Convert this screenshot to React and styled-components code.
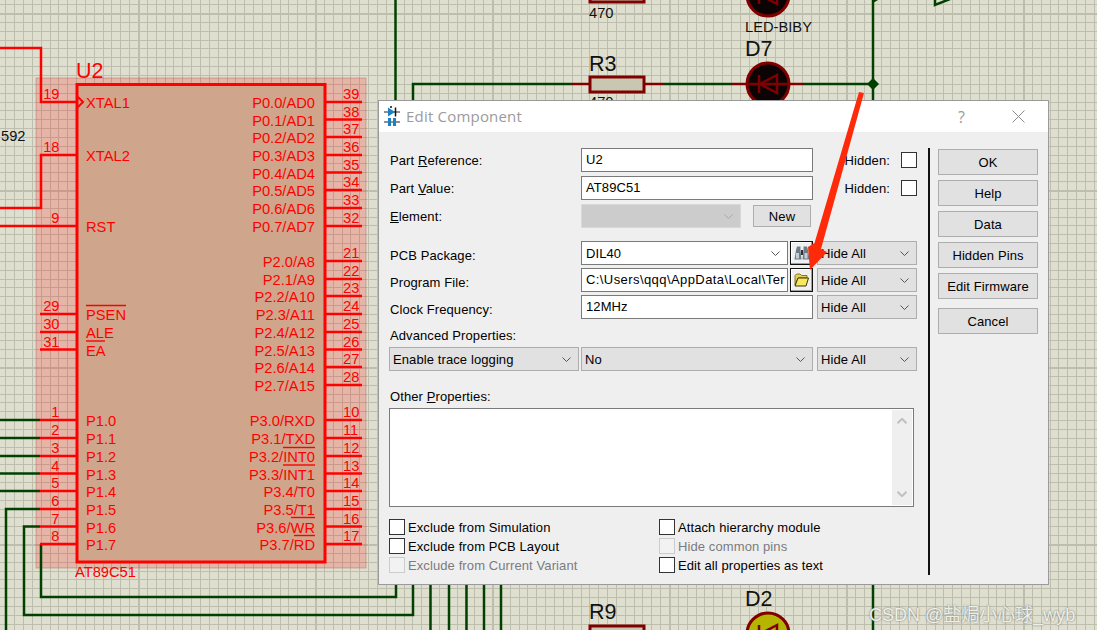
import React from 'react';
import styled, { createGlobalStyle } from 'styled-components';

const GlobalStyle = createGlobalStyle`
  html, body {
    margin: 0;
    padding: 0;
    background: #dfdfcf;
  }
`;

const Page = styled.div`
  position: relative;
  width: 1097px;
  height: 630px;
  overflow: hidden;
  background: #dfdfcf;
  font-family: 'Liberation Sans', Arial, sans-serif;
`;

const Canvas = styled.svg`
  position: absolute;
  left: 0;
  top: 0;
  text {
    font-family: 'Liberation Sans', Arial, sans-serif;
  }
`;

const Dialog = styled.div`
  position: absolute;
  left: 378px;
  top: 100px;
  width: 671px;
  height: 485px;
  box-sizing: border-box;
  border: 1px solid #9a9a9a;
  background: #efefef;
  font-size: 13px;
  letter-spacing: 0.1px;
  color: #000;
  display: flex;
  flex-direction: column;
`;

const TitleBar = styled.div`
  height: 31px;
  flex: none;
  background: #fff;
  display: flex;
  align-items: center;
  padding-left: 5px;
  gap: 6px;
`;

const TitleText = styled.span`
  font-family: 'Open Sans', sans-serif;
  font-size: 15px;
  letter-spacing: 0.2px;
  line-height: 30px;
  margin-top: -2px;
  color: #9b9b9b;
  flex: 1;
`;

const HelpMark = styled.span`
  font-family: 'Open Sans', sans-serif;
  font-size: 16px;
  color: #9a9a9a;
  width: 48px;
`;

const CloseMark = styled.svg`
  margin-right: 23px;
`;

const Body = styled.div`
  flex: 1;
  display: flex;
  padding: 16px 0 9px 10px;
  min-height: 0;
`;

const Form = styled.div`
  width: 528px;
  flex: none;
  display: flex;
  flex-direction: column;
`;

const Row = styled.div`
  display: flex;
  align-items: center;
  height: 24px;
  margin-top: ${(p) => p.$top || 0}px;
`;

const Label = styled.label`
  width: 191px;
  flex: none;
  padding-left: 1px;
  padding-top: ${(p) => (p.$drop ? 5 : 0)}px;
`;

const TextField = styled.div`
  width: ${(p) => p.$w}px;
  height: 24px;
  flex: none;
  box-sizing: border-box;
  border: 1px solid #7a7a7a;
  background: #fff;
  padding-left: 4px;
  line-height: 21px;
  letter-spacing: ${(p) => p.$track || 0.1}px;
  overflow: hidden;
  white-space: nowrap;
`;

const Hidden = styled.div`
  flex: 1;
  display: flex;
  justify-content: flex-end;
  align-items: center;
  gap: 11px;
`;

const Box = styled.span`
  width: 16px;
  height: 16px;
  flex: none;
  box-sizing: border-box;
  border: 1px solid ${(p) => (p.$off ? '#cccccc' : '#333333')};
  background: ${(p) => (p.$off ? '#f2f2f2' : '#ffffff')};
`;

const SelectBox = styled.div`
  width: ${(p) => p.$w}px;
  height: 24px;
  flex: none;
  box-sizing: border-box;
  margin-left: ${(p) => p.$left || 0}px;
  border: 1px solid ${(p) => (p.$white ? '#7a7a7a' : p.$off ? '#d9d9d9' : '#adadad')};
  background: ${(p) => (p.$white ? '#fff' : p.$off ? '#cccccc' : '#e1e1e1')};
  display: flex;
  align-items: center;
  justify-content: space-between;
  padding: 0 7px 0 ${(p) => (p.$white ? 4 : 3)}px;
`;

const PushButton = styled.button`
  width: ${(p) => p.$w || 100}px;
  height: ${(p) => p.$h || 26}px;
  flex: none;
  margin: 0;
  margin-left: ${(p) => p.$left || 0}px;
  margin-top: ${(p) => p.$top || 0}px;
  padding: 0;
  box-sizing: border-box;
  border: 1px solid #adadad;
  background: #e1e1e1;
  color: #000;
  font-family: inherit;
  font-size: 13px;
  letter-spacing: 0.1px;
`;

const IconButton = styled.div`
  width: 23px;
  height: 24px;
  flex: none;
  margin-left: 2px;
  box-sizing: border-box;
  border: 1px solid #111;
  background: #f0f0f0;
  box-shadow: inset -1px -1px 0 #a0a0a0, inset 1px 1px 0 #fff;
  display: flex;
  align-items: center;
  justify-content: center;
`;

const BlockLabel = styled.div`
  height: ${(p) => p.$h}px;
  display: flex;
  align-items: flex-end;
  padding: 0 0 ${(p) => p.$pad}px 1px;
  box-sizing: border-box;
`;

const MemoBox = styled.div`
  width: 525px;
  height: 99px;
  box-sizing: border-box;
  border: 1px solid #7a7a7a;
  background: #fff;
  display: flex;
  justify-content: flex-end;
  padding: 1px;
`;

const ScrollTrack = styled.div`
  width: 20px;
  background: #efefef;
  display: flex;
  flex-direction: column;
  justify-content: space-between;
  align-items: center;
  padding: 8px 0;
  box-sizing: border-box;
`;

const OptionGrid = styled.div`
  margin-top: 12px;
  display: grid;
  grid-template-columns: 270px 1fr;
  grid-auto-rows: 16px;
  row-gap: 3px;
`;

const Option = styled.div`
  display: flex;
  align-items: center;
  gap: 3px;
  color: ${(p) => (p.$off ? '#7b7b80' : '#000')};
`;

const Divider = styled.div`
  width: 2px;
  flex: none;
  margin-left: 11px;
  background: #111;
`;

const ButtonColumn = styled.div`
  margin-left: 8px;
  display: flex;
  flex-direction: column;
  padding-top: 1px;
`;

const Arrow = styled.svg`
  position: absolute;
  left: 0;
  top: 0;
  pointer-events: none;
`;

const Watermark = styled.div`
  position: absolute;
  left: 869px;
  top: 600px;
  font-family: 'Liberation Sans', 'Noto Sans CJK SC', sans-serif;
  font-size: 18px;
  white-space: nowrap;
  color: rgba(245, 245, 240, 0.95);
  text-shadow: 0 0 2px #6a6a60;
`;

const RED = '#ff0000';
const GREEN = '#004100';
const DARK = '#800000';

const rightPins = [
  ['39', 102, 'P0.0/AD0'], ['38', 119.5, 'P0.1/AD1'], ['37', 137, 'P0.2/AD2'], ['36', 155, 'P0.3/AD3'],
  ['35', 172.5, 'P0.4/AD4'], ['34', 190, 'P0.5/AD5'], ['33', 208, 'P0.6/AD6'], ['32', 226, 'P0.7/AD7'],
  ['21', 261, 'P2.0/A8'], ['22', 279, 'P2.1/A9'], ['23', 296, 'P2.2/A10'], ['24', 314, 'P2.3/A11'],
  ['25', 332, 'P2.4/A12'], ['26', 349.5, 'P2.5/A13'], ['27', 367, 'P2.6/A14'], ['28', 385, 'P2.7/A15'],
  ['10', 420, 'P3.0/RXD'], ['11', 438, 'P3.1/TXD'], ['12', 456, 'P3.2/INT0'], ['13', 473.5, 'P3.3/INT1'],
  ['14', 491, 'P3.4/T0'], ['15', 509, 'P3.5/T1'], ['16', 526.5, 'P3.6/WR'], ['17', 544, 'P3.7/RD'],
];

const leftPins = [
  ['19', 102, 'XTAL1'], ['18', 155, 'XTAL2'], ['9', 226, 'RST'], ['29', 314, 'PSEN'],
  ['30', 332, 'ALE'], ['31', 349.5, 'EA'], ['1', 420, 'P1.0'], ['2', 438, 'P1.1'],
  ['3', 456, 'P1.2'], ['4', 473.5, 'P1.3'], ['5', 491, 'P1.4'], ['6', 509, 'P1.5'],
  ['7', 526.5, 'P1.6'], ['8', 544, 'P1.7'],
];

const overlines = [
  [86, 126, 305.5], [86, 105, 341], [283, 315, 447.5], [283, 315, 465],
  [291, 315, 517.5], [294, 315, 535.5],
];

const wires = [
  'M395.5 0V100', 'M413 100V84H571', 'M663 84H731', 'M804 84H873', 'M873 0V100',
  'M0 420H40', 'M0 438H40', 'M0 456H40', 'M0 473.5H40', 'M0 491H40',
  'M40 509H6V630', 'M40 526.5H24V615H378', 'M41 544V597H378',
  'M378 597H396V585', 'M378 615H413V585', 'M430.5 585V630', 'M449 585V630',
  'M466.5 585V630', 'M484 585V630', 'M501 585V630', 'M873 585V630',
];

// grid: 8.85px cells, every 20th line is a heavier one
const gridLines = (start, limit) => {
  const lines = [];
  for (let i = -40; i * 8.85 + start < limit; i += 1) {
    const at = Math.round(start + i * 8.85);
    if (at >= 0) lines.push({ at, major: i % 20 === 0 });
  }
  return lines;
};

function Chevron({ color = '#555', w = 9, h = 5, up = false, sw = 1 }) {
  return (
    <svg width={w} height={h} viewBox="0 0 9 5">
      <path d={up ? 'M0.5 4.5L4.5 0.5L8.5 4.5' : 'M0.5 0.5L4.5 4.5L8.5 0.5'} fill="none" stroke={color} strokeWidth={sw} />
    </svg>
  );
}

function Diode({ cx, cy, fill, inner }) {
  return (
    <g>
      <circle cx={cx} cy={cy} r={21} fill={fill} stroke={DARK} strokeWidth={3} />
      <path d={`M${cx + 9} ${cy - 9}L${cx - 8} ${cy}L${cx + 9} ${cy + 9}Z`} fill="none" stroke={inner} strokeWidth={2.5} />
      <path d={`M${cx - 9} ${cy - 9}V${cy + 9}`} stroke={inner} strokeWidth={2.5} />
      <path d={`M${cx - 37} ${cy}H${cx + 36}`} stroke={DARK} strokeWidth={2.5} />
    </g>
  );
}

function Resistor({ x, y }) {
  return (
    <g>
      <path d={`M${x - 18} ${y}H${x + 74}`} stroke={DARK} strokeWidth={2.5} />
      <rect x={x + 1} y={y - 7} width={54} height={15} fill="#c8c8b0" stroke={DARK} strokeWidth={3} />
    </g>
  );
}

function Schematic() {
  return (
    <Canvas width="1097" height="630" viewBox="0 0 1097 630">
      {gridLines(138, 1097).map((l) => (
        <rect key={`v${l.at}`} x={l.at} y="0" width={l.major ? 2 : 1} height="630" fill="#bebeae" />
      ))}
      {gridLines(13, 630).map((l) => (
        <rect key={`h${l.at}`} x="0" y={l.at} width="1097" height={l.major ? 2 : 1} fill="#bebeae" />
      ))}

      {/* selection tint of the chip */}
      <rect x="36" y="78" width="330" height="490" fill="rgba(255,0,0,0.19)" stroke="rgba(170,90,80,0.4)" />

      {wires.map((d) => (
        <path key={d} d={d} fill="none" stroke={GREEN} strokeWidth={2.5} />
      ))}

      <path d="M0 48H41V102H77" fill="none" stroke={RED} strokeWidth={2.5} />
      <path d="M0 208H41V155H77" fill="none" stroke={RED} strokeWidth={2.5} />
      <path d="M0 226H77" fill="none" stroke={RED} strokeWidth={2.5} />

      <rect x="77" y="84.5" width="248" height="477.5" fill="#cfa68c" stroke={RED} strokeWidth={3} />
      <path d="M78 97L83 102L78 107" fill="none" stroke={RED} strokeWidth={2} />

      {leftPins.slice(3).map(([num, y]) => (
        <path key={num} d={`M40 ${y}H77`} stroke={RED} strokeWidth={2.5} />
      ))}
      {rightPins.map(([num, y]) => (
        <path key={num} d={`M325 ${y}H362`} stroke={RED} strokeWidth={2.5} />
      ))}

      <g fill={RED} fontSize="14.7">
        {leftPins.map(([num, y, name]) => (
          <g key={num}>
            <text x="59.5" y={y - 3} textAnchor="end">{num}</text>
            <text x="86" y={y + 6}>{name}</text>
          </g>
        ))}
        {rightPins.map(([num, y, name]) => (
          <g key={num}>
            <text x="343" y={y - 3}>{num}</text>
            <text x="315" y={y + 6} textAnchor="end">{name}</text>
          </g>
        ))}
        <text x="75" y="577">AT89C51</text>
        <text x="76" y="78" fontSize="21.5">U2</text>
      </g>
      {overlines.map(([a, b, y]) => (
        <line key={`${a}${y}`} x1={a} x2={b} y1={y} y2={y} stroke={RED} strokeWidth={1.4} />
      ))}

      <g fill="#111">
        <text x="1" y="141" fontSize="14.7">592</text>
        <text x="589" y="18" fontSize="14.7">470</text>
        <text x="745" y="32" fontSize="14.7">LED-BIBY</text>
        <text x="745" y="56" fontSize="21.5">D7</text>
        <text x="589" y="71" fontSize="21.5">R3</text>
        <text x="589" y="107" fontSize="14.7">470</text>
        <text x="589" y="619" fontSize="21.5">R9</text>
        <text x="745" y="606" fontSize="21.5">D2</text>
      </g>

      <rect x="590" y="-14" width="54" height="16" fill="#c8c8b0" stroke={DARK} strokeWidth={3} />
      <Resistor x={589} y={84} />
      <Resistor x={589} y={633} />
      <Diode cx={768} cy={-5} fill="#0c0404" inner={DARK} />
      <Diode cx={768} cy={84} fill="#0c0404" inner={DARK} />
      <Diode cx={768} cy={634} fill="#b5b500" inner={DARK} />

      <path d="M873 78L879 84L873 90L867 84Z" fill={GREEN} />
      <path d="M873 -3L878 0L873 3Z" fill={GREEN} />
      <path d="M950 -1L935 5V0" fill="none" stroke={GREEN} strokeWidth={2.5} />
    </Canvas>
  );
}

function AppIcon() {
  return (
    <svg width="16" height="21" viewBox="0 0 16 21">
      <path d="M0 6H16M0 16H16" stroke="#222" strokeWidth="1.2" />
      <path d="M4 1.5L11 6L4 10.5Z" fill="#1d7fc4" />
      <path d="M11.5 1.5V10.5M7 0V2" stroke="#111" strokeWidth="1.5" />
      <path d="M5.5 12V20M10.5 12V20" stroke="#1d7fc4" strokeWidth="3" />
    </svg>
  );
}

function Binoculars() {
  return (
    <svg width="16" height="14" viewBox="0 0 16 14">
      <path d="M3 0.5H6.5V4L7.5 13.5H0.5L2 4Z" fill="#6e7c88" />
      <path d="M9.5 0.5H13L14 4L15.5 13.5H8.5L9.5 4Z" fill="#6e7c88" />
      <path d="M7 4H9V9H7Z" fill="#2c3238" />
      <path d="M2 7H5V12.5H2ZM10.5 7H13.5V12.5H10.5Z" fill="#c4ced6" />
    </svg>
  );
}

function Folder() {
  return (
    <svg width="15" height="14" viewBox="0 0 15 14">
      <path d="M1 2.5L2.5 1H6L7.5 2.5H13V5H4L1 12Z" fill="#e6d24f" stroke="#6c5a10" strokeWidth="0.8" />
      <path d="M4 5H14.5L12 13H1Z" fill="#f7e860" stroke="#3c3406" strokeWidth="1" />
    </svg>
  );
}

function Select({ w, left, children, off, white }) {
  return (
    <SelectBox $w={w} $left={left} $off={off} $white={white}>
      <span>{children}</span>
      <Chevron color={off ? '#a8a8a8' : '#555'} />
    </SelectBox>
  );
}

function Check({ label, off }) {
  return (
    <Option $off={off}>
      <Box $off={off} />
      {label}
    </Option>
  );
}

function EditComponent() {
  return (
    <Dialog>
      <TitleBar>
        <AppIcon />
        <TitleText>Edit Component</TitleText>
        <HelpMark>?</HelpMark>
        <CloseMark width="13" height="13" viewBox="0 0 13 13">
          <path d="M0.5 0.5L12.5 12.5M12.5 0.5L0.5 12.5" stroke="#8a8a8a" strokeWidth="1" />
        </CloseMark>
      </TitleBar>
      <Body>
        <Form>
          <Row>
            <Label>Part <u>R</u>eference:</Label>
            <TextField $w={232}>U2</TextField>
            <Hidden>Hidden:<Box /></Hidden>
          </Row>
          <Row $top={4}>
            <Label>Part <u>V</u>alue:</Label>
            <TextField $w={232}>AT89C51</TextField>
            <Hidden>Hidden:<Box /></Hidden>
          </Row>
          <Row $top={4}>
            <Label><u>E</u>lement:</Label>
            <Select w={160} off />
            <PushButton $w={58} $h={22} $left={12}>New</PushButton>
          </Row>
          <Row $top={13}>
            <Label $drop>PCB Package:</Label>
            <Select w={207} white>DIL40</Select>
            <IconButton><Binoculars /></IconButton>
            <Select w={100} left={4}>Hide All</Select>
          </Row>
          <Row $top={3}>
            <Label $drop>Program File:</Label>
            <TextField $w={207} $track={0.42}>C:\Users\qqq\AppData\Local\Ter</TextField>
            <IconButton><Folder /></IconButton>
            <Select w={100} left={4}>Hide All</Select>
          </Row>
          <Row $top={3}>
            <Label $drop>Clock Frequency:</Label>
            <TextField $w={232}>12MHz</TextField>
            <Select w={100} left={4}>Hide All</Select>
          </Row>
          <BlockLabel $h={28} $pad={4}>Advanced Properties:</BlockLabel>
          <Row>
            <Select w={190}>Enable trace logging</Select>
            <Select w={232} left={2}>No</Select>
            <Select w={100} left={4}>Hide All</Select>
          </Row>
          <BlockLabel $h={37} $pad={4}><span>Other <u>P</u>roperties:</span></BlockLabel>
          <MemoBox>
            <ScrollTrack>
              <Chevron color="#c0c0c0" w={10} h={6} sw={1.8} up />
              <Chevron color="#c0c0c0" w={10} h={6} sw={1.8} />
            </ScrollTrack>
          </MemoBox>
          <OptionGrid>
            <Check label="Exclude from Simulation" />
            <Check label="Attach hierarchy module" />
            <Check label="Exclude from PCB Layout" />
            <Check label="Hide common pins" off />
            <Check label="Exclude from Current Variant" off />
            <Check label="Edit all properties as text" />
          </OptionGrid>
        </Form>
        <Divider />
        <ButtonColumn>
          <PushButton>OK</PushButton>
          <PushButton $top={5}>Help</PushButton>
          <PushButton $top={5}>Data</PushButton>
          <PushButton $top={5}>Hidden Pins</PushButton>
          <PushButton $top={5}>Edit Firmware</PushButton>
          <PushButton $top={9}>Cancel</PushButton>
        </ButtonColumn>
      </Body>
    </Dialog>
  );
}

export default function App() {
  return (
    <Page>
      <GlobalStyle />
      <Schematic />
      <EditComponent />
      <Arrow width="1097" height="630" viewBox="0 0 1097 630">
        <path d="M859 92L864 93L821 249L827 252L810 270L808 247L814.5 243Z" fill="#ff2a0a" />
      </Arrow>
      <Watermark>CSDN @盐焗小心球_wyb</Watermark>
    </Page>
  );
}
